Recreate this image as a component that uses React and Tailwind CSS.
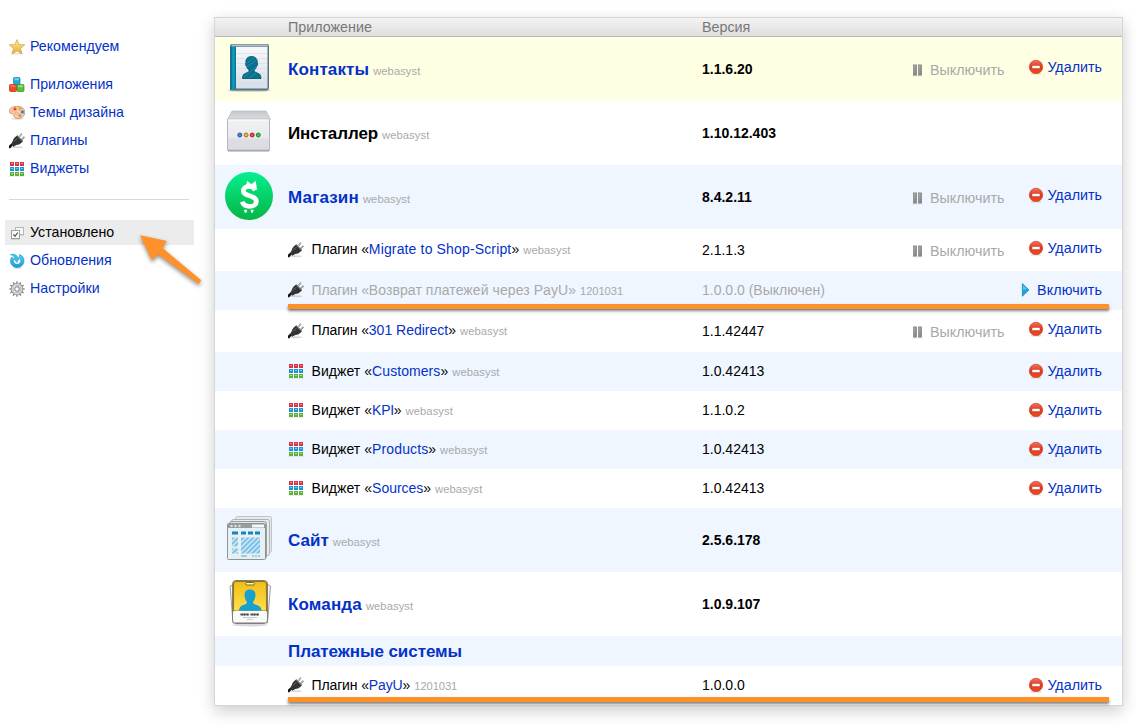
import React from "react";

function StarIcon() {
  return (
    <svg width="16" height="16" viewBox="0 0 16 16" className="block shrink-0">
      <defs>
        <linearGradient id="star" x1="0" y1="0" x2="0" y2="1">
          <stop offset="0" stopColor="#fdf0a4" />
          <stop offset="1" stopColor="#e6a92c" />
        </linearGradient>
      </defs>
      <ellipse cx="8" cy="14.8" rx="6" ry="0.8" fill="#000" opacity=".12" />
      <path d="M8 .6l2.100 5 5.700.2-4.300 3.700 1.600 5.500L8 12l-5.100 3 1.600-5.500L.2 5.800l5.700-.2z" fill="url(#star)" stroke="#d0a040" strokeWidth=".7" strokeLinejoin="round" />
    </svg>
  );
}

function BlocksIcon() {
  return (
    <svg width="16" height="16" viewBox="0 0 16 16" className="block shrink-0">
      <rect x="4.500" y=".5" width="6.500" height="7" rx="1" fill="#1fa9dc" stroke="#0d7fb0" strokeWidth=".7" />
      <rect x="5.500" y="1.300" width="4.500" height="2" fill="#6fd0f2" />
      <rect x=".5" y="7.500" width="7" height="7" rx="1" fill="#ee4a24" stroke="#b92e12" strokeWidth=".7" />
      <rect x="8" y="7.500" width="7" height="7" rx="1" fill="#5dbb3f" stroke="#398f22" strokeWidth=".7" />
      <rect x="9" y="8.300" width="5" height="2" fill="#9adb7f" />
      <rect x="1.500" y="8.300" width="5" height="1.500" fill="#f8795a" />
    </svg>
  );
}

function PaletteIcon() {
  return (
    <svg width="16" height="16" viewBox="0 0 16 16" className="block shrink-0">
      <ellipse cx="8.500" cy="13.800" rx="6" ry="1" fill="#000" opacity=".12" />
      <path d="M.5 5.500C1 2.500 5 1.300 9 1.400c4 .1 7 2.600 6.800 6.200-.2 3.300-3 5.900-6.300 5.900-3 0-4.800-1.200-4.600-3 .2-1.500-.5-1.600-2-1.700C1 8.700.2 7.500.5 5.500z" fill="#f8cda6" stroke="#c48a5e" strokeWidth=".8" />
      <ellipse cx="7.600" cy="8.200" rx="1.300" ry=".9" fill="#fff" stroke="#b97b4d" strokeWidth=".6" />
      <circle cx="6" cy="4" r="1.600" fill="#ea4330" />
      <circle cx="11" cy="3.600" r="1.600" fill="#f5a623" />
      <circle cx="3.300" cy="6.300" r="1.200" fill="#f3b98a" />
      <circle cx="13.400" cy="7" r="1.700" fill="#2b8fd0" />
      <circle cx="10.800" cy="10.500" r="1.500" fill="#e8865a" />
    </svg>
  );
}

function PlugIcon() {
  return (
    <svg width="16" height="16" viewBox="0 0 16 16" className="block shrink-0">
      <ellipse cx="8" cy="14.300" rx="6" ry="1" fill="#000" opacity=".15" />
      <path d="M10.600 3.600L12.800.7M12.700 6.500l2.700-2.600" stroke="#777" strokeWidth="1.500" fill="none" />
      <path d="M10.800 3.400L12.800.8M12.900 6.300l2.400-2.400" stroke="#ddd" strokeWidth=".6" fill="none" />
      <path d="M.3 15.200c.2-1.600 1.200-2.800 3-3.600" stroke="#111" strokeWidth="2.400" fill="none" />
      <path d="M8.300 2.300l5.700 5.700-1.200 1.500c-1.800 1.700-3.500 2.500-5.500 2.500l-3 1.800L2.200 11l1.600-3c.4-1.700 1.400-3.100 2.500-4z" fill="#333" />
      <path d="M8.300 3.200l4.800 4.800M5.200 8.300l3-3" stroke="#777" strokeWidth=".9" fill="none" />
    </svg>
  );
}

function GridIcon() {
  const rows = [
    ["#d9334a", "#f0808c"],
    ["#1d93cf", "#75c7ec"],
    ["#5fae3c", "#a5dc86"],
  ];
  return (
    <svg width="16" height="16" viewBox="0 0 16 16" className="block shrink-0">
      {rows.map(([base, light], r) =>
        [0, 1, 2].map((c) => (
          <g key={r + "-" + c}>
            <rect x={1 + c * 5} y={1 + r * 5} width="4" height="4" fill={base} />
            <rect x={2 + c * 5} y={2 + r * 5} width="2" height="1" fill={light} />
          </g>
        ))
      )}
      <rect x="0" y="15" width="16" height="1" fill="#000" opacity=".06" />
    </svg>
  );
}

function InstalledIcon() {
  return (
    <svg width="16" height="16" viewBox="0 0 16 16" className="block shrink-0">
      <rect x="6.500" y="2.500" width="8" height="7" fill="#f6f6f6" stroke="#b8b8b8" />
      <path d="M11 10.500h4" stroke="#d2d2d2" />
      <rect x="2.500" y="5.500" width="8" height="8" fill="#fcfcfc" stroke="#a0a0a0" />
      <path d="M2 14.500h9" stroke="#d2d2d2" />
      <path d="M4.300 9.300l1.700 1.900 2.800-3.700" stroke="#555" strokeWidth="1.200" fill="none" />
    </svg>
  );
}

function UpdateIcon() {
  return (
    <svg width="16" height="16" viewBox="0 0 16 16" className="block shrink-0">
      <defs>
        <linearGradient id="upd" x1="0" y1="0" x2="0" y2="1">
          <stop offset="0" stopColor="#5fd2f4" />
          <stop offset="1" stopColor="#119fd2" />
        </linearGradient>
      </defs>
      <ellipse cx="8.500" cy="15" rx="5" ry=".8" fill="#000" opacity=".15" />
      <path d="M1.200 1.600C5 .4 8.300 1.600 8.900 5h1.500L8 9.600 4.600 5.400h1.500C5.300 3.300 3.300 2.300 1.200 1.600z" fill="#38bfe8" stroke="#1c9dcc" strokeWidth=".5" />
      <path d="M10.500 1.600c3 .9 4.700 3.400 4.500 6.500-.2 3.700-3 6.400-6.700 6.400-3.900 0-6.800-2.700-6.800-6.500 0-1.600.5-3 1.500-4.100l1.600 2.200c-.4 1-.3 3.200.8 4.200 1.500 1.400 4.300 1.400 5.600-.3 1.300-1.600 1-4.200-.9-5.600z" fill="url(#upd)" stroke="#128fc0" strokeWidth=".6" />
    </svg>
  );
}

function GearIcon() {
  const teeth = Array.from({ length: 12 }, (_, i) => i * 30);
  return (
    <svg width="16" height="16" viewBox="0 0 16 16" className="block shrink-0">
      {teeth.map((a) => (
        <rect key={a} x="7.200" y=".3" width="1.600" height="2.600" rx=".4" fill="#8f8f8f" transform={`rotate(${a} 8 8)`} />
      ))}
      <circle cx="8" cy="8" r="4.900" fill="none" stroke="#858585" strokeWidth="2.400" />
      <circle cx="8" cy="8" r="4.700" fill="none" stroke="#dedede" strokeWidth="1.400" />
      <circle cx="8" cy="8" r="2.300" fill="#fff" stroke="#8c8c8c" strokeWidth="1.200" />
      <path d="M8 3.500v2.500M8 10v2.500M3.500 8H6M10 8h2.500" stroke="#b5b5b5" strokeWidth="1" />
    </svg>
  );
}

function DeleteIcon() {
  return (
    <svg width="16" height="16" viewBox="0 0 16 16" className="block shrink-0">
      <defs>
        <linearGradient id="del" x1="0" y1="0" x2="0" y2="1">
          <stop offset="0" stopColor="#f4705a" />
          <stop offset=".5" stopColor="#e03a20" />
          <stop offset="1" stopColor="#f04a20" />
        </linearGradient>
      </defs>
      <ellipse cx="8" cy="14.700" rx="5.500" ry=".9" fill="#000" opacity=".15" />
      <circle cx="8" cy="7.900" r="6.700" fill="url(#del)" stroke="#c5321b" strokeWidth=".6" />
      <rect x="4" y="6.500" width="8" height="3" fill="#fff" stroke="#c93a22" strokeWidth=".5" />
    </svg>
  );
}

function PauseIcon() {
  return (
    <svg width="16" height="16" viewBox="0 0 16 16" className="block shrink-0">
      <defs>
        <linearGradient id="pau" x1="0" y1="0" x2="1" y2="1">
          <stop offset="0" stopColor="#b5b5b5" />
          <stop offset="1" stopColor="#777" />
        </linearGradient>
      </defs>
      <rect x="3.400" y="2.900" width="3.200" height="10.200" fill="url(#pau)" stroke="#808080" strokeWidth=".7" />
      <rect x="8.400" y="2.900" width="3.200" height="10.200" fill="url(#pau)" stroke="#808080" strokeWidth=".7" />
      <rect x="2" y="13.500" width="11" height="1" fill="#000" opacity=".08" />
    </svg>
  );
}

function PlayIcon() {
  return (
    <svg width="16" height="16" viewBox="0 0 16 16" className="block shrink-0">
      <path d="M4.400 1.600l6.500 6.300-6.500 6.300z" fill="#1ea5de" stroke="#1387bd" strokeWidth=".8" strokeLinejoin="round" />
      <path d="M5 3l4 4-4 1z" fill="#55c5ef" />
    </svg>
  );
}

function ContactsIcon() {
  return (
    <svg width="48" height="48" viewBox="0 0 48 48" className="block">
      <defs>
        <linearGradient id="spine" x1="0" y1="0" x2="1" y2="0">
          <stop offset="0" stopColor="#005e7c" />
          <stop offset=".5" stopColor="#12a4c6" />
          <stop offset="1" stopColor="#00718f" />
        </linearGradient>
        <linearGradient id="page" x1="0" y1="0" x2="0" y2="1">
          <stop offset="0" stopColor="#f6f8fb" />
          <stop offset="1" stopColor="#d9dfe8" />
        </linearGradient>
      </defs>
      <ellipse cx="24" cy="46.600" rx="22" ry="1.200" fill="#000" opacity=".2" />
      <path d="M7 0h35a2 2 0 0 1 2 2v42a2.500 2.500 0 0 1-2 2.500H6a1.500 1.500 0 0 1-1-1.500V2a2 2 0 0 1 2-2z" fill="#53738b" />
      <path d="M7 .5h35l1.500 2H6z" fill="#b8c3c9" />
      <rect x="5.500" y="2.500" width="5.500" height="43" fill="url(#spine)" />
      <path d="M11 3h31.500v41.500H11z" fill="url(#page)" />
      <path d="M12 9.500h30M12 14.500h30M12 19.500h30M12 24.500h30M12 29.500h30M12 34.500h30M12 39.500h30" stroke="#d3dce6" strokeWidth=".7" />
      <path d="M26.500 12.500c4 0 6.200 2.700 5.800 6.300l.3 1.500c0 1-.5 1.800-1.200 2.400-.5 1.800-1.400 2.800-2.200 3.300v1.600c2.300 1.300 5.400 2 6 3.400.6 1 .8 2.200.8 3.500H17.500c0-1.300.2-2.500.8-3.500.7-1.400 3.700-2.100 5.800-3.400V26c-.9-.5-1.800-1.500-2.300-3.300-.7-.6-1.200-1.400-1.200-2.400l.3-1.500c-.3-3.600 1.500-6.300 5.600-6.300z" fill="#08738f" stroke="#034f66" strokeWidth=".8" />
      <path d="M21.800 19.500l7-6M19 33l12-10M24 34l8-6M21.500 23l10-7" stroke="#3594ad" strokeWidth=".7" />
    </svg>
  );
}

function InstallerIcon() {
  return (
    <svg width="48" height="48" viewBox="0 0 48 48" className="block">
      <defs>
        <linearGradient id="lid" x1="0" y1="0" x2="0" y2="1">
          <stop offset="0" stopColor="#c4c6cc" />
          <stop offset="1" stopColor="#dcdee2" />
        </linearGradient>
        <linearGradient id="box" x1="0" y1="0" x2="0" y2="1">
          <stop offset="0" stopColor="#f0f1f3" />
          <stop offset=".55" stopColor="#eaebee" />
          <stop offset=".65" stopColor="#dcdee3" />
          <stop offset="1" stopColor="#d9dbe1" />
        </linearGradient>
      </defs>
      <path d="M7 3h34l4.500 8.500h-43z" fill="url(#lid)" stroke="#b9bcc2" strokeWidth=".8" />
      <rect x="2.500" y="11" width="42" height="32" rx="1" fill="url(#box)" stroke="#b4b8bf" />
      <path d="M3 42.500h41" stroke="#a2a6ae" strokeWidth="1.500" />
      <path d="M3 12h41" stroke="#fff" />
      <circle cx="14.800" cy="27" r="2" fill="#4f86ed" stroke="#173f96" strokeWidth=".9" />
      <circle cx="21.100" cy="27" r="2" fill="#f6b72c" stroke="#9b6810" strokeWidth=".9" />
      <circle cx="27.200" cy="27" r="2" fill="#ee5140" stroke="#98190d" strokeWidth=".9" />
      <circle cx="33.300" cy="27" r="2" fill="#3fc653" stroke="#107b21" strokeWidth=".9" />
    </svg>
  );
}

function ShopIcon() {
  return (
    <svg width="48" height="48" viewBox="0 0 48 48" className="block">
      <defs>
        <linearGradient id="coin" x1="0" y1="0" x2="0" y2="1">
          <stop offset="0" stopColor="#04f08f" />
          <stop offset="1" stopColor="#05b545" />
        </linearGradient>
      </defs>
      <circle cx="24" cy="24" r="24" fill="url(#coin)" />
      <path d="M30.300 18.200c-1.200-2.600-3.300-3.800-6.100-3.800-3.500 0-5.900 1.700-5.900 4.300 0 6.200 13 3.900 13 10.700 0 3.200-2.900 5-6.800 5-3.600 0-6.200-1.500-7.300-4.600" stroke="#fff" strokeWidth="4.800" fill="none" />
      <path d="M21 13.500L22.300 8.800l3.200 2.900h1.700l3.400-2.900 1.200 6.700-5 1z" fill="#fff" />
      <path d="M18.800 37.800h3.400l-.8 3h-1.500zM25.500 37.800h3.400l-1.100 3h-1.500z" fill="#fff" />
    </svg>
  );
}

function SiteIcon() {
  return (
    <svg width="48" height="48" viewBox="0 0 48 48" className="block">
      <defs>
        <pattern id="stripes" width="3.500" height="3.500" patternUnits="userSpaceOnUse" patternTransform="rotate(45)">
          <rect width="3.500" height="3.500" fill="#d3ebf7" />
          <rect width="2" height="3.500" fill="#77bfe6" />
        </pattern>
      </defs>
      <rect x="10.500" y="1.500" width="36" height="36" rx="2" fill="#e6eaee" stroke="#c0c4c8" />
      <rect x="6.500" y="4.500" width="38" height="36" rx="2" fill="#e9edf0" stroke="#aeb2b6" />
      <rect x="4.500" y="6.500" width="37" height="37" rx="2" fill="#dfe6ea" stroke="#9a9ea2" />
      <rect x="2.500" y="8.500" width="38" height="36" rx="1" fill="#e5f0f2" stroke="#8e9497" />
      <path d="M3 9h37v4H3z" fill="#999da0" />
      <path d="M27 9.500h12v3H27z" fill="#f4f6f8" />
      <circle cx="6.500" cy="11" r="1.200" fill="#ddd" />
      <circle cx="10.500" cy="11" r="1.200" fill="#ddd" />
      <circle cx="14.500" cy="11" r="1.200" fill="#ddd" />
      <path d="M7 16.500h6v3H7zM16 16.500h5v3h-5zM23 16.500h5v3h-5zM30 16.500h5v3h-5z" fill="#1683bd" />
      <path d="M7 22.500h6v9H7zM7 33.500h6v5H7zM16 22.500h19v16H16z" fill="url(#stripes)" />
      <path d="M16 41h6M27 41h2M30 41h2M33 41h2" stroke="#58aacd" />
    </svg>
  );
}

function TeamIcon() {
  return (
    <svg width="48" height="48" viewBox="0 0 48 48" className="block">
      <defs>
        <linearGradient id="badge" x1="0" y1="0" x2="0" y2="1">
          <stop offset="0" stopColor="#f0bd18" />
          <stop offset="1" stopColor="#ffe04d" />
        </linearGradient>
      </defs>
      <ellipse cx="25" cy="46" rx="18" ry="1.500" fill="#000" opacity=".15" />
      <path d="M5 7l5-2 4 38-6 1z" fill="#f4f4f4" stroke="#888" strokeWidth=".8" />
      <path d="M45.500 7l-4-2-4 38 5 1z" fill="#f4f4f4" stroke="#888" strokeWidth=".8" />
      <rect x="7.500" y="1.500" width="35" height="43" rx="3.500" fill="#fafafa" stroke="#7d7d7d" />
      <path d="M11 2.500h28a2.500 2.500 0 0 1 2.500 2.500v27h-33V5A2.500 2.500 0 0 1 11 2.500z" fill="url(#badge)" stroke="#96780d" strokeWidth="1.100" />
      <rect x="20.500" y="3.500" width="9" height="2.500" rx="1.200" fill="#fff4af" stroke="#71580a" strokeWidth=".9" />
      <path d="M25 10.500c4 0 5.900 2.800 5.400 6.500-.3 3-1.300 4.500-2.200 5.500v2c2.500 1.300 6.500 2.200 7.500 4 .6 1 .8 2 .8 3.300H14c0-1.300.2-2.300.8-3.300 1-1.800 4.500-2.700 7-4v-2c-1-1-2-2.500-2.200-5.500-.5-3.700 1.400-6.500 5.400-6.500z" fill="#18a1cf" />
      <path d="M9 32.500h32" stroke="#fff" />
      <path d="M15.500 35.500H24M25.500 35.500H34" stroke="#333" strokeWidth="2" strokeDasharray="1.300 .3" />
      <path d="M18 38.500h14M22 40.500h6" stroke="#bbb" strokeWidth=".8" />
      <path d="M9.500 43.500h31" stroke="#b9b9b9" />
    </svg>
  );
}

function NavItem({ icon, label, active }) {
  return (
    <div className={active ? "flex h-[25px] items-center bg-[#ececec] pl-1" : "flex h-[25px] items-center pl-1"}>
      {icon}
      <span className={active ? "ml-[5px] text-black" : "ml-[5px] text-[#0432c8]"}>{label}</span>
    </div>
  );
}

function Sidebar() {
  return (
    <nav className="w-[189px] shrink-0 pt-[34px] text-[14.2px] leading-[25px]">
      <NavItem icon={<StarIcon />} label="Рекомендуем" />
      <div className="mt-[13px] flex flex-col gap-[3px]">
        <NavItem icon={<BlocksIcon />} label="Приложения" />
        <NavItem icon={<PaletteIcon />} label="Темы дизайна" />
        <NavItem icon={<PlugIcon />} label="Плагины" />
        <NavItem icon={<GridIcon />} label="Виджеты" />
      </div>
      <div className="mt-[18px] mr-[5px] ml-1 h-px bg-[#d9d9d9]" />
      <div className="mt-5 flex flex-col gap-[3px]">
        <NavItem icon={<InstalledIcon />} label="Установлено" active />
        <NavItem icon={<UpdateIcon />} label="Обновления" />
        <NavItem icon={<GearIcon />} label="Настройки" />
      </div>
    </nav>
  );
}

const apps = {
  contacts: <ContactsIcon />,
  installer: <InstallerIcon />,
  shop: <ShopIcon />,
  site: <SiteIcon />,
  team: <TeamIcon />,
};

const rows = [
  { type: "app", icon: "contacts", name: "Контакты", spacing: "tracking-[0.12px]", version: "1.1.6.20", pause: true, remove: true, bg: "bg-[#ffffe3]" },
  { type: "app", icon: "installer", name: "Инсталлер", spacing: "tracking-[-0.1px]", plain: true, version: "1.10.12.403", bg: "bg-white" },
  { type: "app", icon: "shop", name: "Магазин", spacing: "tracking-[0.17px]", version: "8.4.2.11", pause: true, remove: true, bg: "bg-[#eff6ff]" },
  { type: "plugin", name: "Migrate to Shop-Script", spacing: "tracking-[0.15px]", version: "2.1.1.3", vendor: "webasyst", pause: true, remove: true, bg: "bg-white" },
  { type: "plugin", name: "Возврат платежей через PayU", spacing: "tracking-[0.08px]", version: "1.0.0.0 (Выключен)", vendor: "1201031", off: true, marked: "bottom-px", bg: "bg-[#eff6ff]" },
  { type: "plugin", name: "301 Redirect", spacing: "tracking-[0px]", version: "1.1.42447", vendor: "webasyst", pause: true, remove: true, bg: "bg-white" },
  { type: "widget", name: "Customers", spacing: "tracking-[0.07px]", version: "1.0.42413", vendor: "webasyst", remove: true, bg: "bg-[#eff6ff]" },
  { type: "widget", name: "KPI", spacing: "tracking-[-0.3px]", version: "1.1.0.2", vendor: "webasyst", remove: true, bg: "bg-white" },
  { type: "widget", name: "Products", spacing: "tracking-[0.12px]", version: "1.0.42413", vendor: "webasyst", remove: true, bg: "bg-[#eff6ff]" },
  { type: "widget", name: "Sources", spacing: "tracking-[-0.03px]", version: "1.0.42413", vendor: "webasyst", remove: true, bg: "bg-white" },
  { type: "app", icon: "site", name: "Сайт", spacing: "tracking-[0px]", version: "2.5.6.178", bg: "bg-[#eff6ff]" },
  { type: "app", icon: "team", name: "Команда", spacing: "tracking-[0.15px]", version: "1.0.9.107", bg: "bg-white" },
  { type: "section", name: "Платежные системы", spacing: "tracking-[-0.06px]", bg: "bg-[#eff6ff]" },
  { type: "plugin", name: "PayU", spacing: "tracking-[-0.15px]", version: "1.0.0.0", vendor: "1201031", remove: true, marked: "bottom-[3px]", bg: "bg-white" },
];

function Vendor({ children }) {
  return (
    <span className={children === "webasyst" ? "ml-1 text-[11.2px] tracking-[0.08px] text-[#a9a9a9]" : "ml-1 text-[11.2px] tracking-[-0.08px] text-[#a9a9a9]"}>
      {children}
    </span>
  );
}

function ItemName({ row }) {
  if (row.type === "app" || row.type === "section") {
    return (
      <div className="flex items-baseline pt-0.5">
        <span className={`text-[17px] font-bold ${row.spacing} ${row.plain ? "text-black" : "text-[#0432c8]"}`}>{row.name}</span>
        {row.type === "app" && <Vendor>webasyst</Vendor>}
      </div>
    );
  }
  const isPlugin = row.type === "plugin";
  return (
    <div className="flex items-center">
      {isPlugin ? <PlugIcon /> : <GridIcon />}
      <div className={row.off ? "ml-[7.500px] flex items-baseline text-[#a9a9a9]" : "ml-[7.500px] flex items-baseline text-black"}>
        <span className="whitespace-pre">
          <span className={isPlugin ? "tracking-[-0.13px]" : "tracking-[0.06px]"}>{isPlugin ? "Плагин" : "Виджет"} «</span>
          <span className={`${row.spacing} ${row.off ? "" : "text-[#0432c8]"}`}>{row.name}</span>»
        </span>
        <Vendor>{row.vendor}</Vendor>
      </div>
    </div>
  );
}

function Row({ row }) {
  const isApp = row.type === "app";
  const height = isApp ? "h-16" : row.type === "section" ? "h-[30px]" : row.pause ? "h-[42px]" : "h-[39px]";
  return (
    <div className={`relative grid shrink-0 grid-cols-[73px_414px_200px_1fr] items-center text-[14px] leading-5 ${height} ${row.bg}`}>
      <div className="pb-0.5 pl-[10px]">{isApp && apps[row.icon]}</div>
      <div className={row.type === "plugin" || row.type === "widget" ? "pb-px" : ""}>
        <ItemName row={row} />
      </div>
      <div className={(isApp ? "font-bold text-black" : row.off ? "text-[#a9a9a9]" : "text-black") + (row.pause || isApp ? "" : " pb-px")}>{row.version}</div>
      <div className="flex items-center justify-end pr-5">
        {row.pause && (
          <div className="flex items-center pt-px text-[14.3px] text-[#a9a9a9]">
            <PauseIcon />
            <span className="ml-[4px]">Выключить</span>
          </div>
        )}
        {row.remove && (
          <div className={row.pause ? "ml-6 flex items-center pb-[4px]" : "ml-6 flex items-center pb-px"}>
            <DeleteIcon />
            <span className="ml-[3px] text-[14.3px] text-[#0432c8]">Удалить</span>
          </div>
        )}
        {row.off && (
          <div className="flex items-center pb-px">
            <PlayIcon />
            <span className="ml-[3px] text-[14.3px] tracking-[0.1px] text-[#0432c8]">Включить</span>
          </div>
        )}
      </div>
      {row.marked && <div className={`absolute left-[73px] z-10 h-[5px] w-[821px] bg-[#ff912b] shadow-[0_2px_3px_rgba(0,0,0,0.5)] ${row.marked}`} />}
    </div>
  );
}

function Arrow() {
  return (
    <svg width="70" height="60" viewBox="0 0 70 60" className="absolute top-[230px] left-[136px] overflow-visible drop-shadow-[0_2px_2px_rgba(0,0,0,0.45)]">
      <path d="M4 5.200L31 11l-4.800 6.700L65.200 50.300 62.700 54 22 24.200 16 30.600z" fill="#ff912b" />
    </svg>
  );
}

export default function App() {
  return (
    <div className="relative flex h-[727px] w-[1136px] overflow-hidden bg-white pl-[5px] font-['Liberation_Sans',sans-serif]">
      <Sidebar />
      <main className="mt-[17px] ml-5 flex h-[689px] w-[909px] shrink-0 flex-col border border-[#d5d5d5] bg-white shadow-[0_5px_15px_rgba(0,0,0,0.2)]">
        <div className="grid h-[19px] shrink-0 grid-cols-[73px_414px_1fr] items-center border-b border-[#b9b9b9] bg-linear-to-b from-[#f3f3f3] to-[#dfdfdf] text-[14.3px] leading-[18px] text-[#777777]">
          <div />
          <div>Приложение</div>
          <div>Версия</div>
        </div>
        {rows.map((row, i) => (
          <Row key={i} row={row} />
        ))}
      </main>
      <Arrow />
    </div>
  );
}
